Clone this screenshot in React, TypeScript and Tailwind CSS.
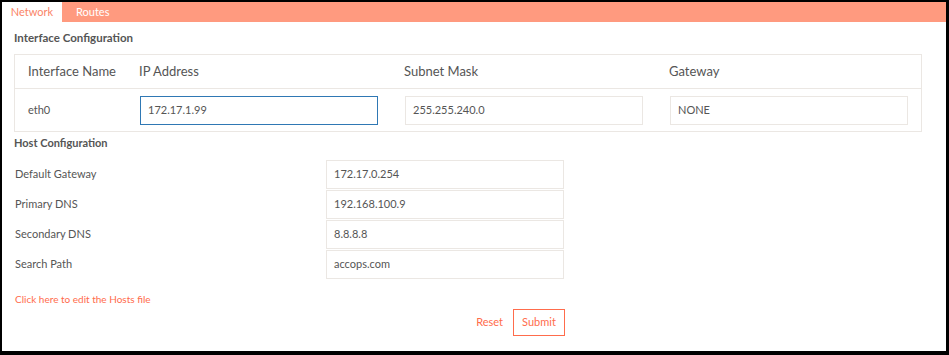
const font = { fontFamily: "Lato, 'Open Sans', sans-serif" };

const hostRows = [
  { label: "Default Gateway", value: "172.17.0.254" },
  { label: "Primary DNS", value: "192.168.100.9" },
  { label: "Secondary DNS", value: "8.8.8.8" },
  { label: "Search Path", value: "accops.com" },
];

function Field({ value, active }: { value: string; active?: boolean }) {
  return (
    <div
      className={
        "h-[29px] w-[238px] flex items-center pl-[7px] text-[11px] text-[#555] bg-white border " +
        (active ? "border-[#2f78b4]" : "border-[#ebe7e3]")
      }
    >
      {value}
    </div>
  );
}

export default function App() {
  return (
    <div className="bg-black w-[949px] h-[355px] pt-[2px] pl-[2px] pr-[3px] pb-[4px]" style={font}>
      <div className="bg-white h-full flex flex-col">
        {/* tabs */}
        <div className="h-[20px] bg-[#ff9a7f] flex text-[11px]">
          <div className="w-[60px] bg-white text-[#fa8466] flex items-center justify-center">Network</div>
          <div className="pl-[14px] text-white flex items-center">Routes</div>
        </div>

        <div className="pl-[12px]">
          <div className="mt-[8px] h-[16px] leading-[16px] text-[11.5px] font-bold text-[#555]">
            Interface Configuration
          </div>

          {/* interface table */}
          <div className="mt-[8px] w-[908px] border border-[#ebe7e3]">
            <div className="h-[34px] flex items-center pt-[1px] pl-[13px] text-[13px] text-[#555] border-b border-[#ebe7e3]">
              <div className="w-[111px]">Interface Name</div>
              <div className="w-[265px]">IP Address</div>
              <div className="w-[265px]">Subnet Mask</div>
              <div>Gateway</div>
            </div>
            <div className="h-[42px] flex items-center pl-[13px] text-[11px] text-[#555]">
              <div className="w-[112px]">eth0</div>
              <div className="w-[265px]">
                <Field value="172.17.1.99" active />
              </div>
              <div className="w-[265px]">
                <Field value="255.255.240.0" />
              </div>
              <Field value="NONE" />
            </div>
          </div>

          <div className="mt-[3px] h-[16px] leading-[16px] text-[11px] font-bold text-[#555]">
            Host Configuration
          </div>

          {/* host rows */}
          <div className="mt-[9px] flex flex-col gap-[1px]">
            {hostRows.map((r) => (
              <div key={r.label} className="flex items-center">
                <div className="w-[312px] pl-[1px] text-[11px] text-[#555]">{r.label}</div>
                <Field value={r.value} />
              </div>
            ))}
          </div>

          <div className="mt-[12px] h-[16px] leading-[16px] pl-[1px] text-[10px] text-[#ff6c4c]">
            Click here to edit the Hosts file
          </div>

          <div className="mt-[2px] w-[551px] flex justify-end items-center gap-[10px] text-[11px]">
            <button className="text-[#ff6c4c]">Reset</button>
            <button className="h-[27px] w-[52px] border border-[#ff6c4c] text-[#ff6c4c]">Submit</button>
          </div>
        </div>
      </div>
    </div>
  );
}
